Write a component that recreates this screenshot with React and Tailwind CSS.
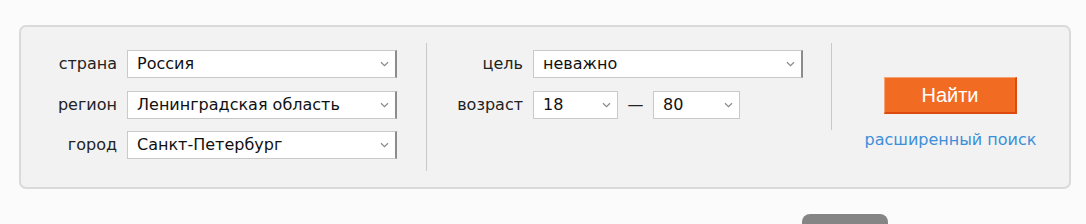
const font = { fontFamily: '"DejaVu Sans", Verdana, sans-serif' };

function Chevron() {
  return (
    <svg width="9" height="6" viewBox="0 0 9 6" className="shrink-0">
      <path d="M1 1.2 L4.5 4.6 L8 1.2" fill="none" stroke="#8a8a8a" strokeWidth="1.2" />
    </svg>
  );
}

function Select({ value, className = "" }) {
  return (
    <div className={`h-[28px] bg-white border border-[#c9c9c9] flex items-center pl-[9px] pr-[6px] ${className}`}>
      <span className="flex-1 text-[16px] text-[#111] leading-none whitespace-nowrap">{value}</span>
      <Chevron />
    </div>
  );
}

function Row({ label, children }) {
  return (
    <div className="flex items-center">
      <div className="w-[96px] text-right text-[16px] text-[#222] leading-none">{label}</div>
      <div className="ml-[10px] flex items-center">{children}</div>
    </div>
  );
}

export default function App() {
  return (
    <div className="h-[224px] bg-[#fbfbfb] pt-[25px] pl-[19px] pr-[15px] overflow-hidden" style={font}>
      <div className="h-[164px] border-2 border-[#dadada] rounded-[7px] bg-[#f2f2f2] flex items-start pt-[16px]">
        {/* основные поля */}
        <div className="w-[406px] h-[128px] border-r border-[#c8c8c8] pt-[7px] flex flex-col gap-[12.5px]">
          <Row label="страна">
            <Select value="Россия" className="w-[270px] border-r-2 border-r-[#8c8c8c]" />
          </Row>
          <Row label="регион">
            <Select value="Ленинградская область" className="w-[270px] border-r-2 border-r-[#8c8c8c]" />
          </Row>
          <Row label="город">
            <Select value="Санкт-Петербург" className="w-[270px] border-r-2 border-r-[#8c8c8c]" />
          </Row>
        </div>

        <div className="w-[405px] h-[87px] border-r border-[#c8c8c8] pt-[7px] flex flex-col gap-[12.5px]">
          <Row label="цель">
            <Select value="неважно" className="w-[270px] border-r-2 border-r-[#8c8c8c]" />
          </Row>
          <Row label="возраст">
            <Select value="18" className="w-[85px]" />
            <span className="w-[35px] text-center text-[16px] text-[#222]">—</span>
            <Select value="80" className="w-[87px]" />
          </Row>
        </div>

        {/* кнопка */}
        <div className="flex-1 flex flex-col items-center pt-[34px]">
          <button
            className="w-[133px] h-[37px] bg-[#f26b22] border border-t-[#f6a272] border-l-[#f6a272] border-r-2 border-b-2 border-r-[#dc4a0f] border-b-[#dc4a0f] text-white text-[20px] leading-none"
            style={{ fontFamily: '"Liberation Sans", Arial, sans-serif' }}
          >
            Найти
          </button>
          <a href="#" className="mt-[18px] text-[16px] text-[#3d8fd8] leading-none">
            расширенный поиск
          </a>
        </div>
      </div>
      <div className="ml-[783px] mt-[25px] w-[86px] h-[20px] rounded-t-[8px] bg-[#858585]" />
    </div>
  );
}
